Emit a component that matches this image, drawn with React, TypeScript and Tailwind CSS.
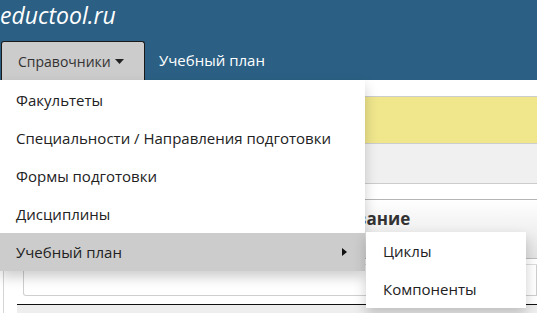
import { useState } from "react";

// ─── Data ───────────────────────────────────────────────────────────────────
const MENU = [
  "Факультеты",
  "Специальности / Направления подготовки",
  "Формы подготовки",
  "Дисциплины",
];

const SUBMENU = ["Циклы", "Компоненты"];

export default function App() {
  const [open] = useState(true);

  return (
    <div className="relative w-[537px] h-[313px] overflow-hidden bg-white font-['Open_Sans',sans-serif] text-[#222]">
      {/* Header */}
      <header className="h-[80px] bg-[#2b6084] flex flex-col">
        <div className="h-[41px] text-white italic text-[23px] leading-[30px]">eductool.ru</div>
        <nav className="flex items-stretch h-[39px]">
          <button className="ml-[1px] w-[144px] h-[39px] bg-[#cccccc] border border-b-0 border-[#1a1a1a] rounded-t-[3px] flex items-center pl-[16px] text-[14px] text-[#333]">
            Справочники
            <svg width="9" height="5" viewBox="0 0 9 5" className="ml-[4px]">
              <path d="M0 0h9L4.5 5z" fill="#222" />
            </svg>
          </button>
          <span className="ml-[14px] flex items-center text-white text-[15px]">Учебный план</span>
        </nav>
      </header>

      {/* Page content (behind the menu) */}
      <main className="pt-[16px]">
        <div className="h-[48px] bg-[#f0e68c] border-y border-[#cccccc]" />
        <div className="h-[40px] bg-[#f0f0f0] border-b border-[#cccccc]" />
        <div className="h-[16px] border-b border-[#b5b5b5]" />
        <div className="h-[59px] bg-gradient-to-b from-white to-[#e3e3e3] border-b border-[#bdbdbd] pl-[274px] pt-[6px]">
          <span className="font-bold text-[17px] text-[#333]">Наименование</span>
        </div>
        <div className="h-[6px] border-b border-[#dddddd]" />
        <div className="ml-[3px] border-l border-[#d5d5d5] h-[60px]">
          <div className="ml-[19px] h-[31px] border border-t-0 border-[#cfcfcf] rounded-bl-[3px]" />
          <div className="ml-[13px] mt-[8px] h-[30px] bg-[#eeeeee] border-t border-[#111]" />
        </div>
      </main>

      {/* Dropdown */}
      {open && (
        <div className="absolute left-0 top-[80px] w-[365px] pt-[1px] bg-white shadow-[0_6px_12px_rgba(0,0,0,0.2)]">
          {MENU.map(item => (
            <div key={item} className="h-[38px] flex items-center pl-[16px] text-[15px]">
              {item}
            </div>
          ))}
          <div className="h-[38px] flex items-center justify-between pl-[16px] pr-[18px] bg-[#cccccc] text-[15px]">
            Учебный план
            <svg width="5" height="8" viewBox="0 0 5 8">
              <path d="M0 0l5 4-5 4z" fill="#111" />
            </svg>
          </div>
        </div>
      )}

      {/* Submenu */}
      {open && (
        <div className="absolute left-[366px] top-[232px] w-[160px] bg-white shadow-[0_6px_12px_rgba(0,0,0,0.2)]">
          {SUBMENU.map(item => (
            <div key={item} className="h-[38px] flex items-center pl-[17px] text-[15px]">
              {item}
            </div>
          ))}
        </div>
      )}
    </div>
  );
}
